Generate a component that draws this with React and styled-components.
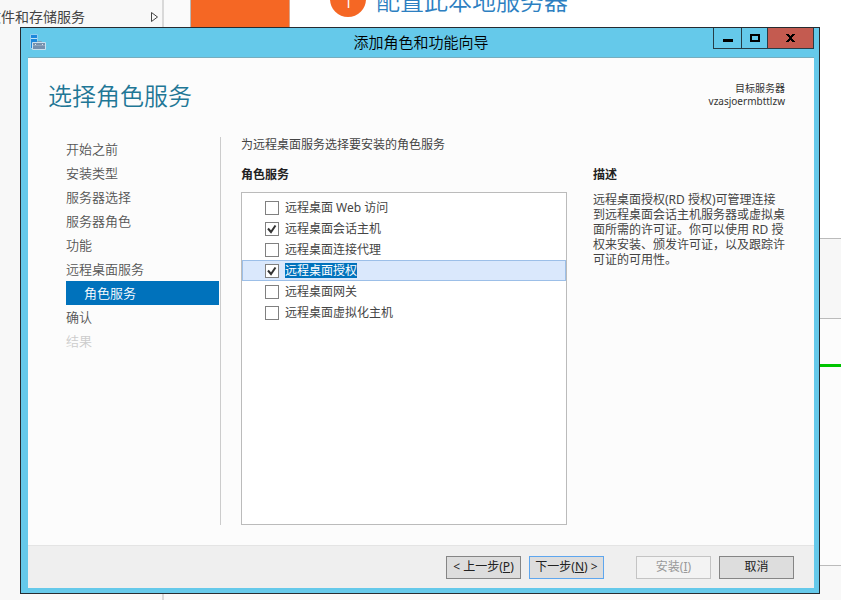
import { useState } from "react"
import styled, { createGlobalStyle } from "styled-components"

const GlobalStyle = createGlobalStyle`
  *, *::before, *::after { box-sizing: border-box; }
  body {
    margin: 0;
    font-family: "Noto Sans", "Noto Sans CJK SC", sans-serif;
    font-size: 12px;
    color: #444;
    background: #f8f8f8;
  }
  h1, h2, h3, p, ul { margin: 0; padding: 0; }
  ul { list-style: none; }
`

/* Server manager behind the wizard */
const Desktop = styled.div`
  position: relative;
  display: grid;
  grid-template-columns: 164px 1fr;
  min-height: 100vh;
  overflow: hidden;
`
const SideNav = styled.nav`
  border-right: 2px solid #d9d9d9;
  background: #f8f8f8;
`
const SideItem = styled.a`
  display: flex;
  align-items: center;
  justify-content: space-between;
  height: 34px;
  padding-right: 3px;
  color: #444;
  font-size: 14px;
  line-height: 20px;
  text-decoration: none;
  white-space: nowrap;
`
const SideText = styled.span`
  margin-left: -13px;
`
const Dashboard = styled.main`
  display: flex;
  flex-direction: column;
  padding-left: 26px;
  background: #fafafa;
`
const Welcome = styled.section`
  display: flex;
  gap: 40px;
  height: 239px;
  background: #fff;
  border-left: 1px solid #b9b9b9;
  border-bottom: 1px solid #bbb;
`
const QuickStart = styled.div`
  width: 99px;
  background: #f56724;
  border-right: 1px solid #d9a58c;
`
const StepLine = styled.div`
  display: flex;
  align-items: flex-start;
  gap: 10px;
`
const StepBadge = styled.span`
  display: grid;
  place-items: center;
  width: 36px;
  height: 36px;
  margin-top: -19px;
  border-radius: 50%;
  background: #f56724;
  color: #fff;
  font-size: 22px;
  font-weight: 300;
  line-height: 36px;
`
const StepLink = styled.a`
  margin-top: -15px;
  color: #2d7fc1;
  font-size: 24px;
  font-weight: 350;
  line-height: 32px;
  text-decoration: none;
`
const GroupTitle = styled.div`
  height: 79px;
  background: #f7f7f7;
`
const Groups = styled.section`
  height: 248px;
  padding-top: 45px;
  background: #fcfcfc;
  border-top: 1px solid #bbb;
  border-bottom: 1px solid #bbb;
`
const HealthBar = styled.div`
  height: 3px;
  background: #00c400;
`
const DashboardEnd = styled.div`
  flex: 1;
  margin-left: -26px;
  background: #f8f8f8;
`

/* Wizard window */
const Window = styled.div`
  position: absolute;
  inset: 27px 21px 6px 20px;
  display: flex;
  flex-direction: column;
  padding: 0 5px 5px 7px;
  border: 1px solid #262b30;
  background: #65c9ea;
`
const TitleBar = styled.header`
  display: grid;
  grid-template-columns: 1fr auto 1fr;
  height: 30px;
  padding-right: 2px;
  margin-right: -2px;
`
const TitleIcon = styled.svg`
  margin: 5px 0 0 1px;
`
const Title = styled.h1`
  color: #000;
  font-size: 15px;
  font-weight: 350;
  line-height: 29px;
`
const Controls = styled.div`
  display: flex;
  justify-self: end;
  height: 21px;
  border: 1px solid #263d47;
  border-top: 0;
`
const ControlButton = styled.button`
  display: grid;
  place-items: center;
  width: ${p => p.$width}px;
  padding: 0;
  border: 0;
  border-left: ${p => p.$first ? "0" : "1px solid #263d47"};
  background: ${p => p.$close ? "#c45b50" : "transparent"};
`
const Panel = styled.div`
  flex: 1;
  display: flex;
  flex-direction: column;
  margin-top: -1px;
  border-top: 1px solid #76adbe;
  background: #fcfcfc;
`
const Head = styled.div`
  display: flex;
  justify-content: space-between;
  height: 79px;
  padding: 22px 29px 0 20px;
`
const Heading = styled.h2`
  color: #1f7796;
  font-size: 24px;
  font-weight: 350;
  line-height: 32px;
`
const Target = styled.div`
  color: #333;
  font-size: 10px;
  line-height: 13px;
  padding-top: 2px;
  text-align: right;
`
const Columns = styled.div`
  flex: 1;
  display: grid;
  grid-template-columns: 155px 1fr 193px;
  padding: 0 28px 20px 38px;
`
const Steps = styled.ul`
  padding-right: 1px;
  border-right: 1px solid #ccc;
`
const Step = styled.li`
  height: 24px;
  padding-left: ${p => p.$nested ? 18 : 0}px;
  background: ${p => p.$current ? "#0072bc" : "transparent"};
  color: ${p => p.$current ? "#fff" : p.$disabled ? "#ccc" : "#555"};
  font-size: 13px;
  font-weight: 350;
  line-height: 24px;
`
const Choices = styled.section`
  display: flex;
  flex-direction: column;
  padding: 0 26px 0 20px;
`
const Lead = styled.p`
  height: 30px;
  line-height: 15px;
`
const Label = styled.h3`
  height: 25px;
  color: #222;
  font-size: 12px;
  font-weight: 700;
  line-height: 15px;
`
const RoleList = styled.ul`
  flex: 1;
  padding: 4px 0;
  border: 1px solid #bbb;
  background: #fff;
`
const RoleRow = styled.li`
  height: 21px;
  padding-left: 22px;
  border: 1px solid ${p => p.$selected ? "#9cbfe8" : "transparent"};
  background: ${p => p.$selected ? "#dae8fc" : "transparent"};
`
const RoleLabel = styled.label`
  display: flex;
  align-items: center;
  gap: 6px;
  height: 100%;
`
const Tick = styled.span`
  display: grid;
  width: 14px;
  height: 14px;

  > * { grid-area: 1 / 1; }
  > svg { pointer-events: none; }
`
const TickInput = styled.input`
  appearance: none;
  width: 14px;
  height: 14px;
  margin: 0;
  border: 1px solid #808080;
  background: #fff;
`
const RoleName = styled.span`
  background: ${p => p.$selected ? "#0072bc" : "transparent"};
  color: ${p => p.$selected ? "#fff" : "#444"};
  line-height: 15px;
`
const Description = styled.aside`
  padding-top: 30px;
`
const DescriptionText = styled.p`
  line-height: 15px;
`
const Footer = styled.footer`
  display: flex;
  align-items: center;
  justify-content: flex-end;
  gap: 8px;
  height: 43px;
  padding-right: 20px;
  border-top: 1px solid #e4e4e4;
  background: #efefef;
`
const WizardButton = styled.button`
  width: 75px;
  height: 23px;
  margin-left: ${p => p.$apart ? 24 : 0}px;
  padding: 0;
  border: 1px solid ${p => p.$primary ? "#5ea6ee" : "#858585"};
  background: #dddddd;
  color: #222;
  font: inherit;
  line-height: 16px;
  white-space: nowrap;

  &:disabled {
    border-color: #c4c4c4;
    background: #f3f3f3;
    color: #999;
  }
`

const steps = [
  { name: "开始之前" },
  { name: "安装类型" },
  { name: "服务器选择" },
  { name: "服务器角色" },
  { name: "功能" },
  { name: "远程桌面服务" },
  { name: "角色服务", nested: true, current: true },
  { name: "确认" },
  { name: "结果", disabled: true },
]

const roles = [
  "远程桌面 Web 访问",
  "远程桌面会话主机",
  "远程桌面连接代理",
  "远程桌面授权",
  "远程桌面网关",
  "远程桌面虚拟化主机",
]

const WizardIcon = () => (
  <TitleIcon width="18" height="18" viewBox="0 0 18 18" aria-hidden="true">
    <path d="M1.5 1.5h7v14h-7z" fill="#1e88dc" stroke="#94cff0" />
    <path d="M2 5.500h6" stroke="#bfe3f6" />
    <path d="M8.500 9.500v-1h4v1" fill="none" stroke="#7d9dba" />
    <path d="M3.500 9.500h13v7h-13z" fill="#7590ae" stroke="#c9e0ef" />
    <path d="M4 12.500h12" stroke="#90a5bd" />
    <path d="M6 11.500h1M13 11.500h1" stroke="#dce6ef" />
  </TitleIcon>
)

const App = () => {
  const [checked, setChecked]   = useState([1, 3])
  const [selected, setSelected] = useState(3)

  const toggle = (i) => {
    setSelected(i)
    setChecked(checked.includes(i) ? checked.filter(c => c !== i) : [...checked, i])
  }

  return (
    <>
      <GlobalStyle />

      <Desktop lang="zh-CN">
        <SideNav>
          <SideItem href="#storage">
            <SideText>文件和存储服务</SideText>
            <svg width="9" height="12" viewBox="0 0 9 12" aria-hidden="true">
              <path d="M1.500 1.500v9L7.500 6z" fill="none" stroke="#444" />
            </svg>
          </SideItem>
        </SideNav>
        <Dashboard>
          <Welcome>
            <QuickStart />
            <StepLine>
              <StepBadge>1</StepBadge>
              <StepLink href="#configure">配置此本地服务器</StepLink>
            </StepLine>
          </Welcome>
          <GroupTitle />
          <Groups>
            <HealthBar />
          </Groups>
          <DashboardEnd />
        </Dashboard>

        <Window role="dialog" aria-labelledby="wizard-title">
          <TitleBar>
            <WizardIcon />
            <Title id="wizard-title">添加角色和功能向导</Title>
            <Controls>
              <ControlButton $first $width={27} aria-label="最小化">
                <svg width="10" height="12" shapeRendering="crispEdges">
                  <path d="M0 7h10v3H0z" />
                </svg>
              </ControlButton>
              <ControlButton $width={26} aria-label="最大化">
                <svg width="10" height="10" shapeRendering="crispEdges">
                  <path d="M1 2h8v6H1z" fill="none" stroke="#000" strokeWidth="2" />
                </svg>
              </ControlButton>
              <ControlButton $close $width={46} aria-label="关闭">
                <svg width="9" height="10" shapeRendering="crispEdges">
                  <path d="M0 1h3v1h1v1h1V2h1V1h3v1H8v1H7v1H6v2h1v1h1v1h1v1H6V8H5V7H4v1H3v1H0V8h1V7h1V6h1V4H2V3H1V2H0z" />
                </svg>
              </ControlButton>
            </Controls>
          </TitleBar>

          <Panel>
            <Head>
              <Heading>选择角色服务</Heading>
              <Target>
                目标服务器<br />
                vzasjoermbttlzw
              </Target>
            </Head>

            <Columns>
              <Steps>
                {steps.map(step => (
                  <Step
                    key={step.name}
                    $nested={step.nested}
                    $current={step.current}
                    $disabled={step.disabled}
                  >
                    {step.name}
                  </Step>
                ))}
              </Steps>

              <Choices>
                <Lead>为远程桌面服务选择要安装的角色服务</Lead>
                <Label>角色服务</Label>
                <RoleList>
                  {roles.map((role, i) => (
                    <RoleRow key={role} $selected={selected === i}>
                      <RoleLabel>
                        <Tick>
                          <TickInput
                            type="checkbox"
                            checked={checked.includes(i)}
                            onChange={() => toggle(i)}
                          />
                          {checked.includes(i) && (
                            <svg width="14" height="14" viewBox="0 0 14 14" aria-hidden="true">
                              <path d="M3 6.500l3 3.500 4.500-6.500" fill="none" stroke="#333" strokeWidth="2" />
                            </svg>
                          )}
                        </Tick>
                        <RoleName $selected={selected === i}>{role}</RoleName>
                      </RoleLabel>
                    </RoleRow>
                  ))}
                </RoleList>
              </Choices>

              <Description>
                <Label>描述</Label>
                <DescriptionText>
                  远程桌面授权(RD 授权)可管理连接到远程桌面会话主机服务器或虚拟桌面所需的许可证。你可以使用 RD 授权来安装、颁发许可证，以及跟踪许可证的可用性。
                </DescriptionText>
              </Description>
            </Columns>

            <Footer>
              <WizardButton>&lt; 上一步(<u>P</u>)</WizardButton>
              <WizardButton $primary>下一步(<u>N</u>) &gt;</WizardButton>
              <WizardButton $apart disabled>安装(<u>I</u>)</WizardButton>
              <WizardButton>取消</WizardButton>
            </Footer>
          </Panel>
        </Window>
      </Desktop>
    </>
  )
}

export default App
